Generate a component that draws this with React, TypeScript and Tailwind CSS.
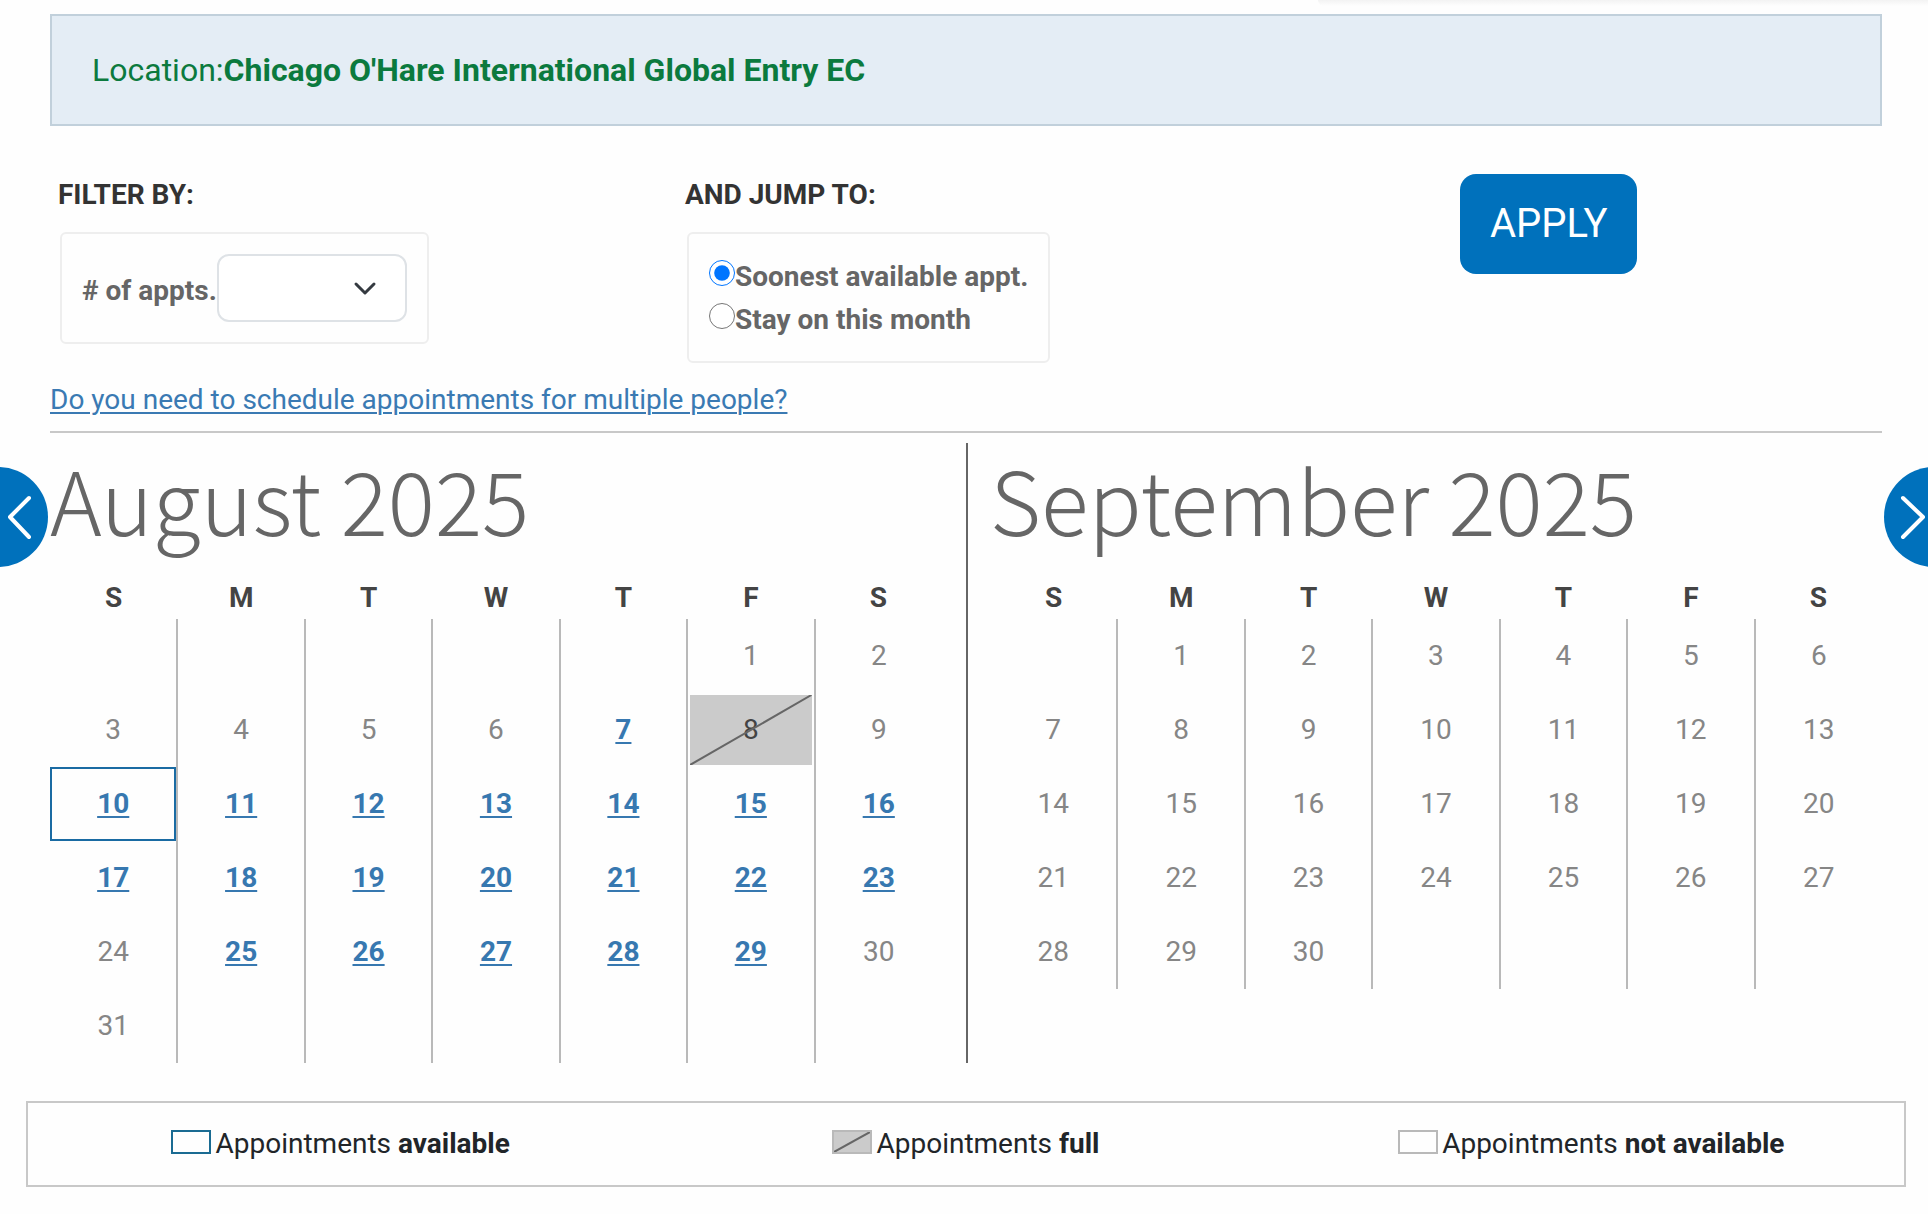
import { useState } from "react";

type Status = "none" | "open" | "full" | "selected";
type Month = { name: string; offset: number; days: number; status: Record<number, Status> };

const openDays = [7, 11, 12, 13, 14, 15, 16, 17, 18, 19, 20, 21, 22, 23, 25, 26, 27, 28, 29];

const august: Month = {
  name: "August 2025",
  offset: 5,
  days: 31,
  status: {
    ...Object.fromEntries(openDays.map((d) => [d, "open" as Status])),
    8: "full",
    10: "selected",
  },
};

const september: Month = { name: "September 2025", offset: 1, days: 30, status: {} };

function Slash() {
  return (
    <svg className="absolute inset-0 h-full w-full" viewBox="0 0 100 100" preserveAspectRatio="none" aria-hidden="true">
      <line x1="0" y1="100" x2="100" y2="0" stroke="#666" strokeWidth="2" vectorEffect="non-scaling-stroke" />
    </svg>
  );
}

function Day({ day, status }: { day: number; status: Status }) {
  if (status === "open" || status === "selected") {
    return (
      <div
        className={
          status === "selected"
            ? "flex h-[74px] items-center justify-center border-2 border-[#1a6ba3]"
            : "flex h-[74px] items-center justify-center"
        }
      >
        <a href="#" className="font-bold text-[#3778b0] underline decoration-2 underline-offset-3">
          {day}
        </a>
      </div>
    );
  }
  if (status === "full") {
    return (
      <div className="relative m-0.5 flex h-[70px] items-center justify-center bg-[#cbcbcb] text-[#444]">
        <Slash />
        {day}
      </div>
    );
  }
  return <div className="flex h-[74px] items-center justify-center text-[#868686]">{day}</div>;
}

function Calendar({ month }: { month: Month }) {
  const weekCount = Math.ceil((month.offset + month.days) / 7);
  const weeks = Array.from({ length: weekCount }, (_, w) =>
    Array.from({ length: 7 }, (_, d) => {
      const n = w * 7 + d - month.offset + 1;
      return n > 0 && n <= month.days ? n : null;
    }),
  );
  return (
    <>
      <h2 className="mb-6 whitespace-nowrap font-['Noto_Sans_CJK_SC',sans-serif] text-[88px] leading-[110px] font-light text-[#666]">
        {month.name}
      </h2>
      <table className="w-full table-fixed border-collapse text-center leading-8">
        <thead>
          <tr>
            {["S", "M", "T", "W", "T", "F", "S"].map((d, i) => (
              <th key={i} scope="col" className="h-[42px] p-0 font-bold text-[#444]">
                {d}
              </th>
            ))}
          </tr>
        </thead>
        <tbody>
          {weeks.map((week, w) => (
            <tr key={w}>
              {week.map((day, d) => (
                <td key={d} className="h-[74px] border-r-2 border-[#b9b9b9] p-0 last:border-r-0">
                  {day && <Day day={day} status={month.status[day] ?? "none"} />}
                </td>
              ))}
            </tr>
          ))}
        </tbody>
      </table>
    </>
  );
}

export default function App() {
  const [jump, setJump] = useState("soonest");
  return (
    <main className="overflow-hidden bg-[#fefefe] pb-7 font-[Roboto,sans-serif] text-[28px] leading-8 text-[#212529]">
      <div className="flex h-3.5 justify-end">
        <div className="h-1.5 w-[610px] rounded-bl-full bg-linear-to-b from-[#f3f3f3] to-[#fefefe]" />
      </div>

      <div className="pr-[46px] pl-[50px]">
        <div className="border-2 border-[#c1d0db] bg-[#e4edf5] px-10 py-9 text-[32px] leading-9 text-[#0b7a3e]">
          Location:<strong className="font-bold">Chicago O'Hare International Global Entry EC</strong>
        </div>

        <form className="mt-12 grid grid-cols-[627fr_775fr_422fr] pl-2" onSubmit={(e) => e.preventDefault()}>
          <div className="pt-[5px]">
            <h3 className="font-bold text-[#333]">FILTER BY:</h3>
            <div className="mt-[21px] ml-0.5 flex w-fit items-center rounded-md border-2 border-[#eee] p-5 font-bold text-[#666]">
              <label htmlFor="appts" className="pt-1.5">
                # of appts.
              </label>
              <div className="relative">
                <select
                  id="appts"
                  defaultValue=""
                  className="block h-17 w-[190px] appearance-none rounded-xl border-2 border-[#dee2e6] bg-white px-5"
                >
                  <option value=""></option>
                  <option value="1">1</option>
                  <option value="2">2</option>
                </select>
                <svg
                  className="pointer-events-none absolute top-[22px] right-[30px] h-6 w-6"
                  viewBox="0 0 24 24"
                  fill="none"
                  stroke="#343a40"
                  strokeWidth="3"
                  strokeLinecap="round"
                  strokeLinejoin="round"
                  aria-hidden="true"
                >
                  <path d="m3 8 9 9 9-9" />
                </svg>
              </div>
            </div>
          </div>

          <div className="pt-[5px]">
            <h3 className="font-bold text-[#333]">AND JUMP TO:</h3>
            <div className="mt-[21px] ml-0.5 w-fit rounded-md border-2 border-[#eee] px-5 pt-[21px] pb-5 leading-[43px] font-bold text-[#666]">
              {[
                ["soonest", "Soonest available appt."],
                ["stay", "Stay on this month"],
              ].map(([value, text]) => (
                <label key={value} className="flex items-center">
                  <input
                    type="radio"
                    name="jump"
                    value={value}
                    checked={jump === value}
                    onChange={() => setJump(value)}
                    className="mb-2 h-[26px] w-[26px]"
                  />
                  {text}
                </label>
              ))}
            </div>
          </div>

          <div>
            <button type="submit" className="h-25 rounded-2xl bg-[#0071bc] px-[30px] text-[40px] text-white">
              APPLY
            </button>
          </div>
        </form>

        <p className="mt-[21px] border-b-2 border-[#c8c8c8] pb-[15px]">
          <a href="#" className="text-[#3a7ab3] underline decoration-2 underline-offset-3">
            Do you need to schedule appointments for multiple people?
          </a>
        </p>
      </div>

      <div className="mt-2.5 flex items-start">
        <button type="button" aria-label="Previous month" className="mt-6 shrink-0">
          <svg width="48" height="100" viewBox="0 0 48 100" fill="none">
            <circle cx="-2" cy="50" r="50" fill="#0071bc" />
            <path d="M29 31 10 50l19 20" stroke="#fff" strokeWidth="4" strokeLinecap="round" strokeLinejoin="round" />
          </svg>
        </button>
        <div className="grid flex-1 grid-cols-2 px-0.5">
          <section className="pr-6">
            <Calendar month={august} />
          </section>
          <section className="border-l-2 border-[#666] pl-[22px]">
            <Calendar month={september} />
          </section>
        </div>
        <button type="button" aria-label="Next month" className="mt-6 shrink-0">
          <svg width="44" height="100" viewBox="0 0 44 100" fill="none">
            <circle cx="50" cy="50" r="50" fill="#0071bc" />
            <path d="m19 31 20 19-20 20" stroke="#fff" strokeWidth="4" strokeLinecap="round" strokeLinejoin="round" />
          </svg>
        </button>
      </div>

      <ul className="mt-[38px] mr-[22px] ml-[26px] grid grid-cols-3 border-2 border-[#c8c8c8] py-[25px]">
        <li className="flex items-center justify-center gap-1">
          <span className="mb-1 h-6 w-10 border-2 border-[#1a6b92]" />
          <span>
            Appointments <b>available</b>
          </span>
        </li>
        <li className="flex items-center justify-center gap-1">
          <span className="relative mb-1 h-6 w-10 border-2 border-[#b9b9b9] bg-[#cbcbcb]">
            <Slash />
          </span>
          <span>
            Appointments <b>full</b>
          </span>
        </li>
        <li className="flex items-center justify-center gap-1">
          <span className="mb-1 h-6 w-10 border-2 border-[#b9b9b9]" />
          <span>
            Appointments <b>not available</b>
          </span>
        </li>
      </ul>
    </main>
  );
}
